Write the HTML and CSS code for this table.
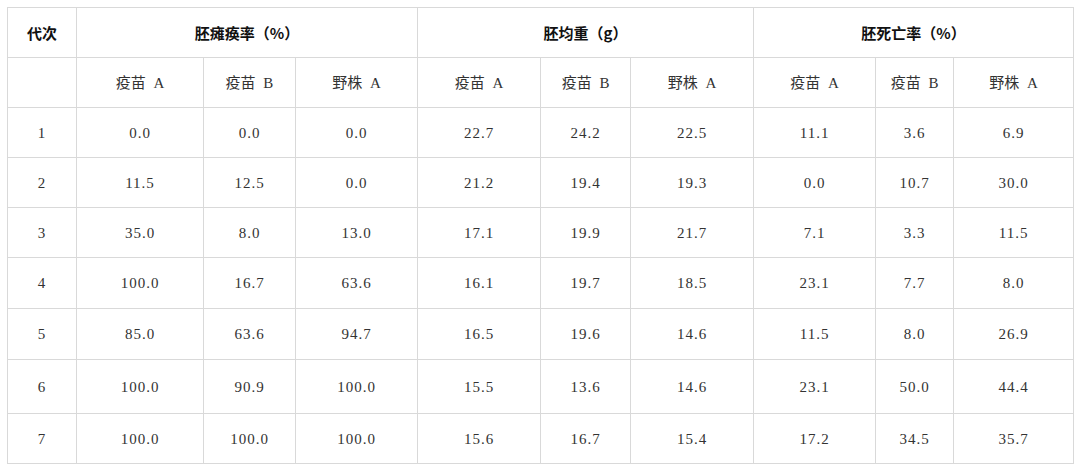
FILE: index.html
```
<!DOCTYPE html>
<html lang="zh">
<head>
<meta charset="utf-8">
<link rel="stylesheet" href="styles.css">
</head>
<body>
<table class="data">
  <colgroup>
    <col class="c0"><col class="c1"><col class="c2"><col class="c3">
    <col class="c4"><col class="c5"><col class="c6">
    <col class="c7"><col class="c8"><col class="c9">
  </colgroup>
  <thead>
    <tr class="r-head">
      <th>代次</th>
      <th colspan="3">胚瘫痪率（%）</th>
      <th colspan="3">胚均重（g）</th>
      <th colspan="3">胚死亡率（%）</th>
    </tr>
    <tr class="r-sub">
      <td></td>
      <td>疫苗 A</td><td>疫苗 B</td><td>野株 A</td>
      <td>疫苗 A</td><td>疫苗 B</td><td>野株 A</td>
      <td>疫苗 A</td><td>疫苗 B</td><td>野株 A</td>
    </tr>
  </thead>
  <tbody>
    <tr class="r50"><td>1</td><td>0.0</td><td>0.0</td><td>0.0</td><td>22.7</td><td>24.2</td><td>22.5</td><td>11.1</td><td>3.6</td><td>6.9</td></tr>
    <tr class="r50"><td>2</td><td>11.5</td><td>12.5</td><td>0.0</td><td>21.2</td><td>19.4</td><td>19.3</td><td>0.0</td><td>10.7</td><td>30.0</td></tr>
    <tr class="r50"><td>3</td><td>35.0</td><td>8.0</td><td>13.0</td><td>17.1</td><td>19.9</td><td>21.7</td><td>7.1</td><td>3.3</td><td>11.5</td></tr>
    <tr class="r51"><td>4</td><td>100.0</td><td>16.7</td><td>63.6</td><td>16.1</td><td>19.7</td><td>18.5</td><td>23.1</td><td>7.7</td><td>8.0</td></tr>
    <tr class="r51"><td>5</td><td>85.0</td><td>63.6</td><td>94.7</td><td>16.5</td><td>19.6</td><td>14.6</td><td>11.5</td><td>8.0</td><td>26.9</td></tr>
    <tr class="r54"><td>6</td><td>100.0</td><td>90.9</td><td>100.0</td><td>15.5</td><td>13.6</td><td>14.6</td><td>23.1</td><td>50.0</td><td>44.4</td></tr>
    <tr class="r50"><td>7</td><td>100.0</td><td>100.0</td><td>100.0</td><td>15.6</td><td>16.7</td><td>15.4</td><td>17.2</td><td>34.5</td><td>35.7</td></tr>
  </tbody>
</table>
</body>
</html>
```

FILE: styles.css
```
html, body {
  margin: 0;
  padding: 0;
  background: #ffffff;
}

body {
  font-family: "Liberation Serif", "Noto Sans CJK SC", serif;
  font-size: 15px;
  color: #333333;
}

.data {
  margin: 7px 0 0 7px;
  width: 1067px;
  border-collapse: collapse;
  table-layout: fixed;
}

.c0 { width: 69px; }
.c1 { width: 127px; }
.c2 { width: 92px; }
.c3 { width: 122px; }
.c4 { width: 123px; }
.c5 { width: 90px; }
.c6 { width: 123px; }
.c7 { width: 122px; }
.c8 { width: 78px; }
.c9 { width: 120px; }

.data th,
.data td {
  border: 1px solid #d9d9d9;
  padding: 0;
  text-align: center;
  vertical-align: middle;
  letter-spacing: 1px;
  line-height: 16px;
}

.data th {
  font-family: "Noto Sans CJK SC", "Liberation Serif", sans-serif;
  font-weight: bold;
  color: #111111;
  font-size: 15px;
  letter-spacing: 0;
}

.r-head th { height: 49px; }
.r-sub td {
  height: 49px;
  font-family: "Liberation Serif", "Noto Sans CJK SC", serif;
  letter-spacing: 0;
  word-spacing: 4px;
}
.r50 td { height: 49px; }
.r51 td { height: 50px; }
.r54 td { height: 53px; }
```
